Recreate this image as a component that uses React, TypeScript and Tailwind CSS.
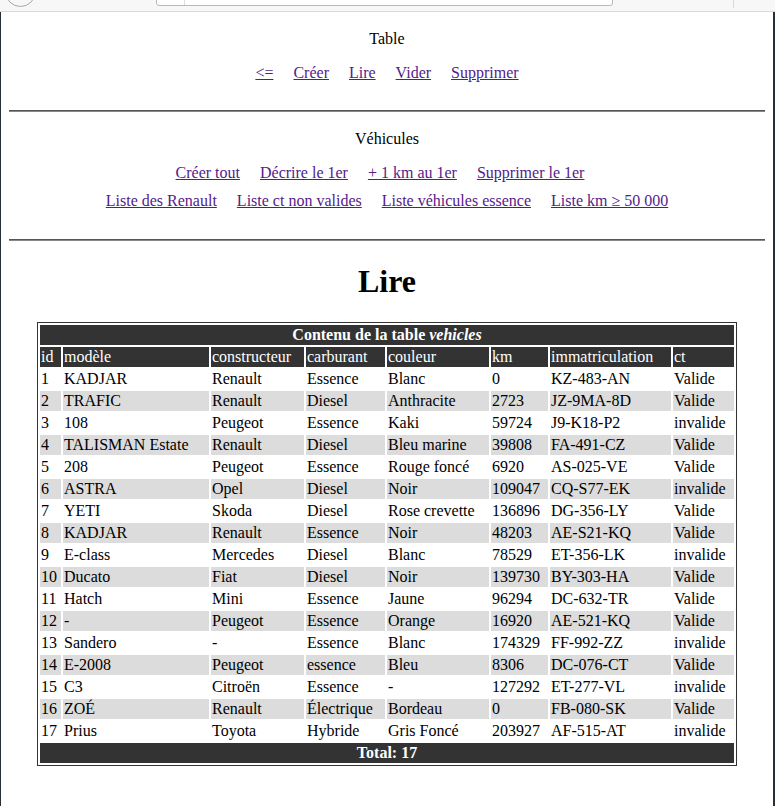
import React from "react"

type Vehicle = [number, string, string, string, string, number, string, string]

const vehicles: Vehicle[] = [
  [1, "KADJAR", "Renault", "Essence", "Blanc", 0, "KZ-483-AN", "Valide"],
  [2, "TRAFIC", "Renault", "Diesel", "Anthracite", 2723, "JZ-9MA-8D", "Valide"],
  [3, "108", "Peugeot", "Essence", "Kaki", 59724, "J9-K18-P2", "invalide"],
  [4, "TALISMAN Estate", "Renault", "Diesel", "Bleu marine", 39808, "FA-491-CZ", "Valide"],
  [5, "208", "Peugeot", "Essence", "Rouge foncé", 6920, "AS-025-VE", "Valide"],
  [6, "ASTRA", "Opel", "Diesel", "Noir", 109047, "CQ-S77-EK", "invalide"],
  [7, "YETI", "Skoda", "Diesel", "Rose crevette", 136896, "DG-356-LY", "Valide"],
  [8, "KADJAR", "Renault", "Essence", "Noir", 48203, "AE-S21-KQ", "Valide"],
  [9, "E-class", "Mercedes", "Diesel", "Blanc", 78529, "ET-356-LK", "invalide"],
  [10, "Ducato", "Fiat", "Diesel", "Noir", 139730, "BY-303-HA", "Valide"],
  [11, "Hatch", "Mini", "Essence", "Jaune", 96294, "DC-632-TR", "Valide"],
  [12, "-", "Peugeot", "Essence", "Orange", 16920, "AE-521-KQ", "Valide"],
  [13, "Sandero", "-", "Essence", "Blanc", 174329, "FF-992-ZZ", "invalide"],
  [14, "E-2008", "Peugeot", "essence", "Bleu", 8306, "DC-076-CT", "Valide"],
  [15, "C3", "Citroën", "Essence", "-", 127292, "ET-277-VL", "invalide"],
  [16, "ZOÉ", "Renault", "Électrique", "Bordeau", 0, "FB-080-SK", "Valide"],
  [17, "Prius", "Toyota", "Hybride", "Gris Foncé", 203927, "AF-515-AT", "invalide"],
]

// largeurs relevées sur la capture (padding compris)
const columns = [
  { label: "id", w: "w-[21px]" },
  { label: "modèle", w: "w-[146px]" },
  { label: "constructeur", w: "w-[93px]" },
  { label: "carburant", w: "w-[79px]" },
  { label: "couleur", w: "w-[102px]" },
  { label: "km", w: "w-[57px]" },
  { label: "immatriculation", w: "w-[121px]" },
  { label: "ct", w: "w-[61px]" },
]

const tableLinks = ["<=", "Créer", "Lire", "Vider", "Supprimer"]
const vehicleLinks = ["Créer tout", "Décrire le 1er", "+ 1 km au 1er", "Supprimer le 1er"]
const listLinks = ["Liste des Renault", "Liste ct non valides", "Liste véhicules essence", "Liste km ≥ 50 000"]

const LinkRow = ({ links, className }: { links: string[]; className?: string }) => (
  <div className={"flex justify-center gap-5 leading-[18px] " + (className ?? "")}>
    {links.map((l) => (
      <a key={l} href="#" className="text-[#551a8b] underline">
        {l}
      </a>
    ))}
  </div>
)

const BrowserChrome = () => (
  <div className="relative h-[12px] shrink-0 overflow-hidden border-b border-[#dadada] bg-[#f7f7f7]">
    <div className="absolute left-[5px] top-[-24px] h-[31px] w-[31px] rounded-full border border-[#a9a9a9] bg-[#f7f7f7]" />
    <div className="absolute left-[156px] top-[-10px] flex h-[16px] w-[457px] rounded-b-[3px] border border-[#b9b9b9] bg-white">
      <div className="ml-[27px] h-full w-px bg-[#dedede]" />
    </div>
    <div className="absolute left-[733px] top-0 h-[8px] w-px bg-[#d9d9d9]" />
  </div>
)

export default function App() {
  return (
    <div className="flex h-[806px] w-[775px] flex-col overflow-hidden bg-white font-['Liberation_Serif','Times_New_Roman',serif] text-[16px] text-black">
      <BrowserChrome />
      <div className="flex min-h-0 flex-1">
        <div className="w-px shrink-0 bg-[#25303a]" />
        <main className="flex-1 px-2">
          <p className="mt-[18px] text-center leading-[18px]">Table</p>
          <LinkRow links={tableLinks} className="mt-4" />
          <div className="mt-[28px] h-[2px] border-t border-b border-t-[#555] border-b-[#888]" />

          <p className="mt-[18px] text-center leading-[18px]">Véhicules</p>
          <LinkRow links={vehicleLinks} className="mt-4 pr-[14px]" />
          <LinkRow links={listLinks} className="mt-[10px]" />
          <div className="mt-[29px] h-[2px] border-t border-b border-t-[#555] border-b-[#888]" />

          <h1 className="mt-[22px] text-center text-[32px] font-bold leading-[37px]">Lire</h1>

          <table className="mx-auto mt-[22px] w-[700px] border-separate border-spacing-[2px] border border-[#333] text-left">
            <thead>
              <tr>
                <th colSpan={8} className="bg-[#333] p-px text-center font-bold leading-[18px] text-white">
                  Contenu de la table <i>vehicles</i>
                </th>
              </tr>
              <tr>
                {columns.map((c) => (
                  <th key={c.label} className={`${c.w} bg-[#333] p-px text-left font-normal leading-[18px] text-white`}>
                    {c.label}
                  </th>
                ))}
              </tr>
            </thead>
            <tbody>
              {vehicles.map((v, i) => (
                <tr key={v[0]} className={i % 2 === 1 ? "bg-[#dcdcdc]" : ""}>
                  {v.map((cell, j) => (
                    <td key={j} className="p-px leading-[18px] whitespace-nowrap">
                      {cell}
                    </td>
                  ))}
                </tr>
              ))}
            </tbody>
            <tfoot>
              <tr>
                <td colSpan={8} className="bg-[#333] p-px text-center font-bold leading-[18px] text-white">
                  Total: {vehicles.length}
                </td>
              </tr>
            </tfoot>
          </table>
        </main>
        <div className="w-[2px] shrink-0 bg-[#25303a]" />
      </div>
    </div>
  )
}
